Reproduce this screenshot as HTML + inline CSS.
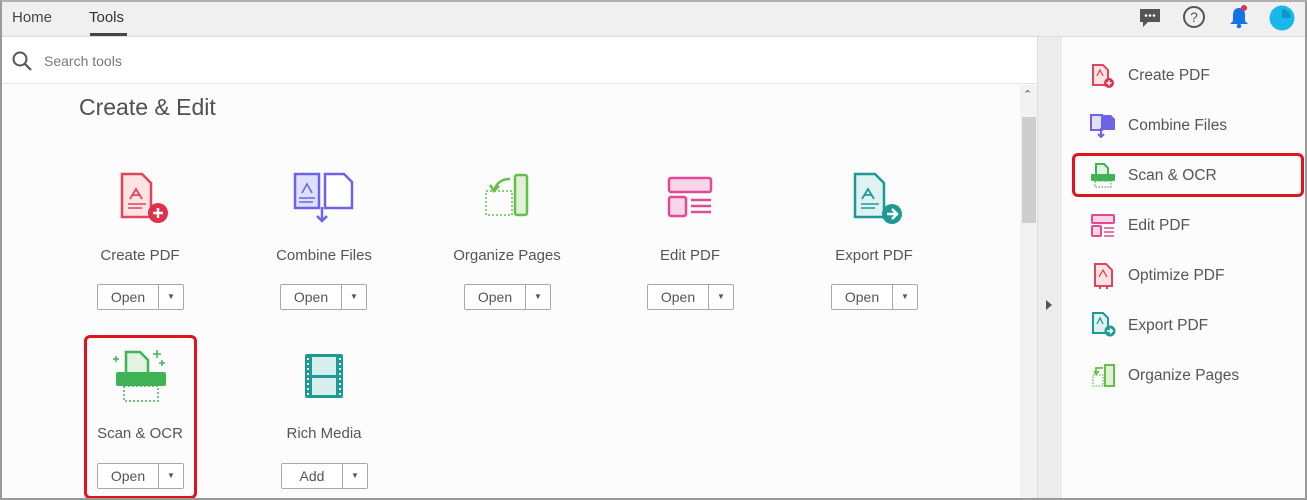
<!DOCTYPE html>
<html><head><meta charset="utf-8"><style>
*{margin:0;padding:0;box-sizing:border-box}
body{width:1307px;height:500px;overflow:hidden;background:#fff;font-family:"Liberation Sans",sans-serif;position:relative;color:#4b4b4b}
.a{position:absolute}
.frame{left:0;top:0;width:1307px;height:500px;border:2px solid #9a9a9a;border-top:2px solid #b0b0b0}
.top{left:0;top:0;width:1307px;height:37px;background:#f0f0f0;border-bottom:1px solid #dcdcdc}
.tab{top:9px;font-size:15px;color:#444}
.lbl{font-size:15px;color:#555;text-align:center;width:180px}
.btn{height:26px;border:1px solid #a8a8a8;border-radius:2px;background:#fff;font-size:14px;color:#555}
.btn .t{position:absolute;left:0;top:0;height:24px;line-height:24px;text-align:center;border-right:1px solid #a8a8a8}
.btn .d{position:absolute;right:0;top:0;width:24px;height:24px;line-height:24px;text-align:center;font-size:8px;color:#555}
.rp{left:1128px;font-size:15.5px;color:#555}
</style></head><body>
<div class="a top"></div>
<div class="a tab" style="left:12px">Home</div>
<div class="a tab" style="left:89px;color:#333">Tools</div>
<div class="a" style="left:90px;top:33px;width:37px;height:3px;background:#444"></div>
<!-- top icons -->
<svg class="a" style="left:1138px;top:6px" width="24" height="24" viewBox="0 0 24 24"><path d="M2 3h20v13H10l-5 5v-5H2z" fill="#555"/><circle cx="8" cy="9.5" r="1.3" fill="#fff"/><circle cx="12" cy="9.5" r="1.3" fill="#fff"/><circle cx="16" cy="9.5" r="1.3" fill="#fff"/></svg>
<svg class="a" style="left:1182px;top:5px" width="24" height="24" viewBox="0 0 24 24"><circle cx="12" cy="12" r="10" fill="none" stroke="#555" stroke-width="2"/><text x="12" y="17" font-size="14" text-anchor="middle" fill="#555" font-family="Liberation Sans">?</text></svg>
<svg class="a" style="left:1227px;top:4px" width="24" height="26" viewBox="0 0 24 26"><path d="M12 4c-4 0-6 3-6 7v6l-3 3h18l-3-3v-6c0-4-2-7-6-7z" fill="#1473e6"/><circle cx="12" cy="22" r="2.3" fill="#1473e6"/><circle cx="17" cy="4" r="3" fill="#e0314b"/></svg>
<svg class="a" style="left:1269px;top:5px" width="26" height="26" viewBox="0 0 26 26"><circle cx="13" cy="13" r="12.5" fill="#1ab7ea"/><path d="M13 13V4a9 9 0 0 1 9 9z" fill="#0d96c9"/></svg>
<!-- search row -->
<div class="a" style="left:2px;top:37px;width:1035px;height:47px;background:#fff;border-bottom:1px solid #e4e4e4"></div>
<svg class="a" style="left:11px;top:50px" width="22" height="22" viewBox="0 0 22 22"><circle cx="9" cy="9" r="6.5" fill="none" stroke="#555" stroke-width="2"/><path d="M14 14l6 6" stroke="#555" stroke-width="2.2"/></svg>
<div class="a" style="left:44px;top:53px;font-size:14px;color:#777">Search tools</div>
<div class="a" style="left:2px;top:85px;width:1018px;height:413px;background:#fcfcfc"></div>
<!-- scrollbar & separator -->
<div class="a" style="left:1020px;top:85px;width:17px;height:413px;background:#f2f2f2"></div>
<div class="a" style="left:1022px;top:117px;width:14px;height:106px;background:#cdcdcd"></div>
<div class="a" style="left:1023px;top:88px;font-size:11px;color:#555">&#8963;</div>
<div class="a" style="left:1037px;top:37px;width:25px;height:461px;background:#ececec;border-left:1px solid #ddd"></div>
<div class="a" style="left:1046px;top:300px;width:0;height:0;border-left:6px solid #555;border-top:5px solid transparent;border-bottom:5px solid transparent"></div>
<div class="a" style="left:1062px;top:37px;width:243px;height:461px;background:#fcfcfc"></div>

<div class="a" style="left:79px;top:94px;font-size:23px;color:#505050">Create &amp; Edit</div>

<!-- icons row 1 -->
<svg class="a" style="left:118px;top:171px" width="54" height="54" viewBox="0 0 54 54"><path d="M4 3h20l9 9v34H4z" fill="#fbe3e6" stroke="#e0455a" stroke-width="2.5"/><path d="M12 28l6-10 6 10M14 24h8" stroke="#e0455a" stroke-width="1.8" fill="none"/><path d="M10 33h18M10 37h14" stroke="#e0455a" stroke-width="1.5"/><circle cx="40" cy="42" r="10" fill="#e0314b"/><path d="M40 37v10M35 42h10" stroke="#fff" stroke-width="2.5"/></svg>
<svg class="a" style="left:292px;top:171px" width="64" height="54" viewBox="0 0 64 54"><path d="M3 3h24v34H3z" fill="#dfe0fb" stroke="#6c63e8" stroke-width="2.5"/><path d="M33 3h19l8 8v26H33z" fill="#fff" stroke="#6c63e8" stroke-width="2.5"/><path d="M10 22l5-9 5 9M7 27h16M7 31h14" stroke="#6c63e8" stroke-width="1.6" fill="none"/><path d="M30 36v14M25 45l5 5 5-5" stroke="#6c63e8" stroke-width="2.5" fill="none"/></svg>
<svg class="a" style="left:480px;top:171px" width="54" height="54" viewBox="0 0 54 54"><rect x="35" y="4" width="12" height="40" rx="2" fill="#e3efd9" stroke="#62c04a" stroke-width="2.5"/><rect x="6" y="20" width="26" height="24" fill="none" stroke="#62c04a" stroke-width="1.5" stroke-dasharray="2 2"/><path d="M30 8c-8 0-14 4-16 12M10 14l4 6 5-5" stroke="#62c04a" stroke-width="2.5" fill="none"/></svg>
<svg class="a" style="left:666px;top:175px" width="48" height="48" viewBox="0 0 48 48"><rect x="3" y="3" width="42" height="14" rx="2" fill="#f7d6e8" stroke="#e04a97" stroke-width="2.5"/><rect x="3" y="22" width="17" height="19" rx="2" fill="#f7d6e8" stroke="#e04a97" stroke-width="2.5"/><path d="M25 25h20M25 31h20M25 37h20" stroke="#e04a97" stroke-width="2.5"/></svg>
<svg class="a" style="left:852px;top:171px" width="56" height="56" viewBox="0 0 56 56"><path d="M3 3h20l9 9v34H3z" fill="#dff1f1" stroke="#1e9a96" stroke-width="2.5"/><path d="M10 28l6-10 6 10M12 24h8" stroke="#1e9a96" stroke-width="1.8" fill="none"/><path d="M9 33h18M9 37h14" stroke="#1e9a96" stroke-width="1.5"/><circle cx="40" cy="43" r="10" fill="#1e9a96"/><path d="M35 43h9M40 38l5 5-5 5" stroke="#fff" stroke-width="2.5" fill="none"/></svg>

<div class="a lbl" style="left:50px;top:247px">Create PDF</div>
<div class="a lbl" style="left:234px;top:247px">Combine Files</div>
<div class="a lbl" style="left:417px;top:247px">Organize Pages</div>
<div class="a lbl" style="left:600px;top:247px">Edit PDF</div>
<div class="a lbl" style="left:784px;top:247px">Export PDF</div>

<div class="a btn" style="left:97px;top:284px;width:87px"><span class="t" style="width:61px">Open</span><span class="d">&#9660;</span></div>
<div class="a btn" style="left:280px;top:284px;width:87px"><span class="t" style="width:61px">Open</span><span class="d">&#9660;</span></div>
<div class="a btn" style="left:464px;top:284px;width:87px"><span class="t" style="width:61px">Open</span><span class="d">&#9660;</span></div>
<div class="a btn" style="left:647px;top:284px;width:87px"><span class="t" style="width:61px">Open</span><span class="d">&#9660;</span></div>
<div class="a btn" style="left:831px;top:284px;width:87px"><span class="t" style="width:61px">Open</span><span class="d">&#9660;</span></div>

<!-- row 2 -->
<svg class="a" style="left:112px;top:348px" width="58" height="56" viewBox="0 0 58 56"><path d="M14 4h14l8 8v14H14z" fill="#e2f3e3" stroke="#3fb356" stroke-width="2.5"/><rect x="4" y="24" width="50" height="14" rx="2" fill="#3fb356"/><rect x="12" y="38" width="34" height="15" fill="none" stroke="#3fb356" stroke-width="1.5" stroke-dasharray="2 2"/><path d="M45 2v8M41 6h8M50 12v6M47 15h6M4 8v6M1 11h6" stroke="#3fb356" stroke-width="1.5"/></svg>
<svg class="a" style="left:302px;top:351px" width="44" height="50" viewBox="0 0 44 50"><rect x="3" y="3" width="38" height="44" rx="2" fill="#1e9a96"/><rect x="10" y="6" width="24" height="18" fill="#d6eeee"/><rect x="10" y="27" width="24" height="17" fill="#d6eeee"/><path d="M6 7v38M38 7v38" stroke="#fff" stroke-width="2" stroke-dasharray="2 3"/></svg>

<div class="a lbl" style="left:50px;top:425px">Scan &amp; OCR</div>
<div class="a lbl" style="left:234px;top:425px">Rich Media</div>
<div class="a btn" style="left:97px;top:463px;width:87px"><span class="t" style="width:61px">Open</span><span class="d">&#9660;</span></div>
<div class="a btn" style="left:281px;top:463px;width:87px"><span class="t" style="width:61px">Add</span><span class="d">&#9660;</span></div>
<div class="a" style="left:84px;top:335px;width:113px;height:164px;border:3px solid #e0141c;border-radius:6px"></div>

<!-- right panel -->
<svg class="a" style="left:1090px;top:63px" width="26" height="26" viewBox="0 0 26 26"><path d="M3 2h10l5 5v15H3z" fill="#fbe3e6" stroke="#e0455a" stroke-width="2"/><path d="M7 13l3-6 3 6" stroke="#e0455a" stroke-width="1.3" fill="none"/><circle cx="19" cy="20" r="5" fill="#e0314b"/><path d="M19 17.5v5M16.5 20h5" stroke="#fff" stroke-width="1.5"/></svg>
<div class="a rp" style="top:67px">Create PDF</div>
<svg class="a" style="left:1089px;top:112px" width="28" height="28" viewBox="0 0 28 28"><rect x="2" y="3" width="11" height="15" fill="#dfe0fb" stroke="#6c63e8" stroke-width="2"/><path d="M14 3h8l4 4v11H14z" fill="#6c63e8"/><path d="M12 16v9M9 22l3 3 3-3" stroke="#6c63e8" stroke-width="2" fill="none"/></svg>
<div class="a rp" style="top:117px">Combine Files</div>
<svg class="a" style="left:1089px;top:162px" width="28" height="28" viewBox="0 0 28 28"><path d="M7 2h8l4 4v7H7z" fill="#e2f3e3" stroke="#3fb356" stroke-width="2"/><rect x="2" y="12" width="24" height="7" rx="1" fill="#3fb356"/><rect x="6" y="19" width="16" height="6" fill="none" stroke="#3fb356" stroke-width="1.2" stroke-dasharray="1.5 1.5"/></svg>
<div class="a rp" style="top:167px">Scan &amp; OCR</div>
<div class="a" style="left:1072px;top:153px;width:232px;height:44px;border:3px solid #e0141c;border-radius:6px"></div>
<svg class="a" style="left:1090px;top:213px" width="26" height="26" viewBox="0 0 26 26"><rect x="2" y="2" width="22" height="8" rx="1" fill="#f7d6e8" stroke="#e04a97" stroke-width="2"/><rect x="2" y="13" width="9" height="10" rx="1" fill="#f7d6e8" stroke="#e04a97" stroke-width="2"/><path d="M14 15h10M14 19h10M14 23h10" stroke="#e04a97" stroke-width="1.5"/></svg>
<div class="a rp" style="top:217px">Edit PDF</div>
<svg class="a" style="left:1092px;top:262px" width="24" height="28" viewBox="0 0 24 28"><path d="M3 2h11l6 6v16H3z" fill="#fbe3e6" stroke="#e0455a" stroke-width="2"/><path d="M7 15l4-7 4 7" stroke="#e0455a" stroke-width="1.3" fill="none"/><path d="M8 24v3M15 24v3" stroke="#e0455a" stroke-width="2"/></svg>
<div class="a rp" style="top:267px">Optimize PDF</div>
<svg class="a" style="left:1090px;top:311px" width="28" height="28" viewBox="0 0 28 28"><path d="M3 2h10l5 5v15H3z" fill="#dff1f1" stroke="#1e9a96" stroke-width="2"/><path d="M7 13l3-6 3 6" stroke="#1e9a96" stroke-width="1.3" fill="none"/><circle cx="20" cy="20" r="5.5" fill="#1e9a96"/><path d="M17 20h5M20 17.5l2.5 2.5-2.5 2.5" stroke="#fff" stroke-width="1.4" fill="none"/></svg>
<div class="a rp" style="top:317px">Export PDF</div>
<svg class="a" style="left:1091px;top:363px" width="26" height="26" viewBox="0 0 26 26"><rect x="14" y="2" width="9" height="21" fill="#e3efd9" stroke="#62c04a" stroke-width="2"/><rect x="2" y="12" width="10" height="11" fill="none" stroke="#62c04a" stroke-width="1.3" stroke-dasharray="1.5 1.5"/><path d="M12 5H5v5M3 8l2 3 3-3" stroke="#62c04a" stroke-width="1.8" fill="none"/></svg>
<div class="a rp" style="top:367px">Organize Pages</div>

<div class="a frame"></div>
</body></html>
